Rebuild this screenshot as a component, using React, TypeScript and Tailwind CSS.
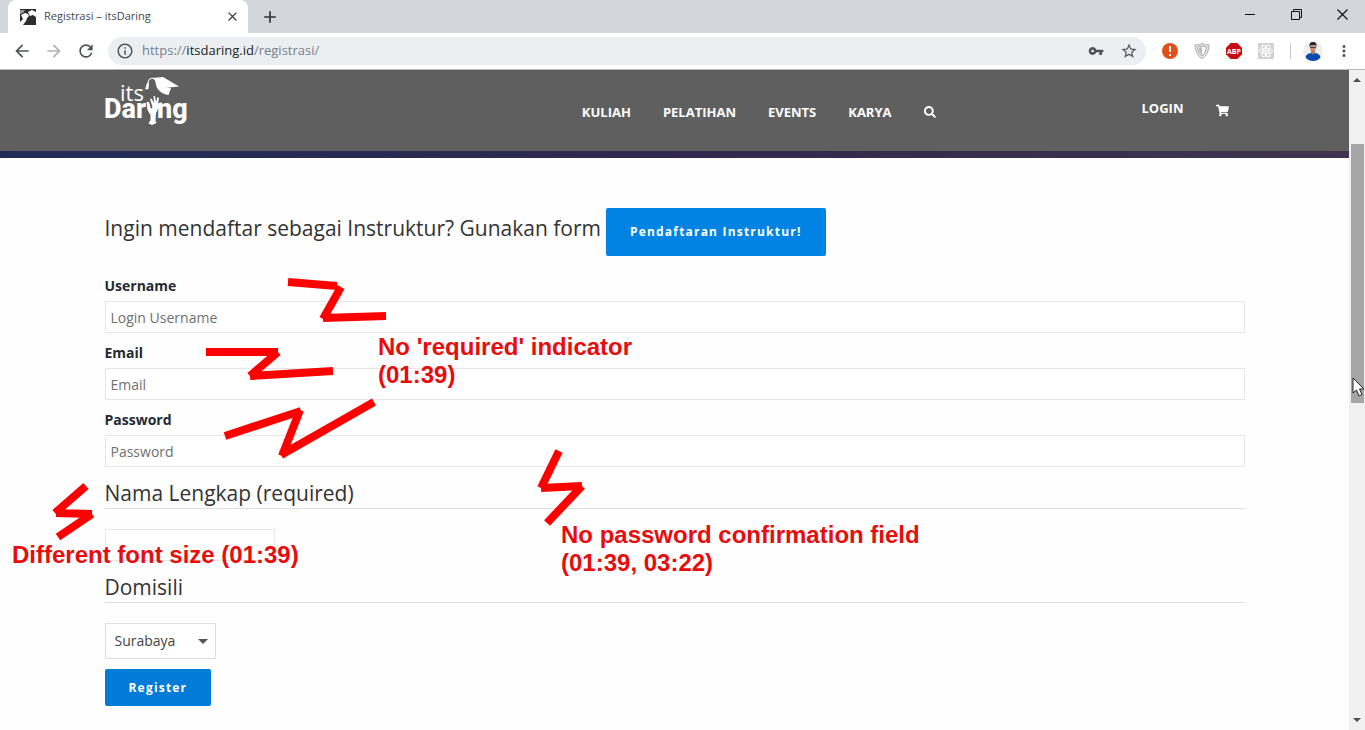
import type { ReactNode } from "react";
import { FaSearch, FaShoppingCart } from "react-icons/fa";
import { MdArrowBack, MdArrowForward, MdClose, MdAdd, MdInfoOutline, MdMoreVert, MdRefresh, MdStarBorder, MdVpnKey } from "react-icons/md";

function Favicon() {
  return (
    <svg viewBox="0 0 16 16" className="h-4 w-4" aria-hidden="true">
      <rect width="16" height="16" fill="#2d2d2d" />
      <path d="M0 1H5L3 4L0 5Z" fill="#999" />
      <path d="M8 3L12 1L16 3V8L13 6L10 7L9 5Z" fill="#fff" />
      <path d="M1 6L5 4L8 5L9 7L7 9L6 12L3 16H0V13L3 10Z" fill="#fff" />
    </svg>
  );
}

function TabStrip() {
  return (
    <div className="flex h-[33px] bg-[#d3d7db] pl-2">
      <div className="flex w-60 items-center gap-2 rounded-t-lg bg-white pr-2 pl-3">
        <Favicon />
        <span className="flex-1 text-[11px] whitespace-nowrap text-[#45494d]">Registrasi – itsDaring</span>
        <button aria-label="Close tab" className="text-[#3c4043]">
          <MdClose size={15} />
        </button>
      </div>
      <button aria-label="New tab" className="ml-3 text-[#303336]">
        <MdAdd size={20} />
      </button>
      <div className="ml-auto flex h-7 items-center">
        <button aria-label="Minimize" className="flex w-[46px] justify-center">
          <svg width="11" height="11" stroke="#111" aria-hidden="true"><path d="M0 5.5H10" /></svg>
        </button>
        <button aria-label="Restore" className="flex w-[46px] justify-center">
          <svg width="11" height="11" fill="none" stroke="#111" aria-hidden="true"><path d="M.5 2.5H8.500V10.500H.5ZM2.500 2.500V.5H10.500V8.500H8.500" /></svg>
        </button>
        <button aria-label="Close" className="flex w-[46px] justify-center">
          <svg width="11" height="11" stroke="#111" strokeWidth="1.200" aria-hidden="true"><path d="M.5 .5L10.500 10.500M10.500 .5L.5 10.500" /></svg>
        </button>
      </div>
    </div>
  );
}

function AlertIcon() {
  return (
    <svg viewBox="0 0 16 16" className="h-4 w-4" aria-hidden="true">
      <circle cx="8" cy="8" r="8" fill="#e34f1c" />
      <path d="M8 3V9M8 11V13" stroke="#fff" strokeWidth="2" />
    </svg>
  );
}

function ShieldIcon() {
  return (
    <svg viewBox="0 0 16 16" className="h-4 w-4" aria-hidden="true">
      <path d="M8 .7C10 1.500 13 2 15 1.800C15 7 13 13 8 15.500C3 13 1 7 1 1.800C3 2 6 1.500 8 .7Z" fill="#e7e7e7" stroke="#aaa" />
      <path d="M8 3L12.500 4C12 8 10.500 11 8 13C5.500 11 4 8 3.500 4Z" fill="#fff" stroke="#a5a5a5" />
      <path d="M8 4V12C6 10 5 8 4.500 5Z" fill="#bbb" />
    </svg>
  );
}

function AdblockIcon() {
  return (
    <svg viewBox="0 0 16 16" className="h-4 w-4" aria-hidden="true">
      <path d="M4.700 0H11.300L16 4.700V11.300L11.300 16H4.700L0 11.300V4.700Z" fill="#c70d13" />
      <text x="8" y="10.500" textAnchor="middle" fill="#fff" fontSize="7" fontWeight="700">ABP</text>
    </svg>
  );
}

function AtomIcon() {
  return (
    <svg viewBox="0 0 16 16" className="h-4 w-4" fill="none" stroke="#fff" aria-hidden="true">
      <rect width="16" height="16" fill="#d2d2d2" stroke="none" />
      <ellipse cx="8" cy="8" rx="6.500" ry="2.500" />
      <ellipse cx="8" cy="8" rx="6.500" ry="2.500" transform="rotate(60 8 8)" />
      <ellipse cx="8" cy="8" rx="6.500" ry="2.500" transform="rotate(120 8 8)" />
      <circle cx="8" cy="8" r="1" fill="#fff" />
    </svg>
  );
}

function Avatar() {
  return (
    <svg viewBox="0 0 20 20" className="h-5 w-5" aria-hidden="true">
      <circle cx="10" cy="10" r="10" fill="#efefef" />
      <path d="M2.500 16.500Q3 12.500 8 12L10 13L12 12Q17 12.500 17.500 16.500Q14.500 20 10 20T2.500 16.500Z" fill="#0b4bb0" />
      <path d="M8 9H12V12L10 13.500L8 12Z" fill="#b77c62" />
      <ellipse cx="10" cy="6.500" rx="3" ry="4" fill="#c98f74" />
      <path d="M6.500 6Q5.800 1 10 1T13.500 6L12.500 4H8Z" fill="#24242c" />
      <path d="M7 6.500H13" stroke="#39313a" strokeWidth=".8" />
    </svg>
  );
}

function Toolbar() {
  return (
    <div className="flex h-[37px] items-center border-b border-[#b8b8b8] bg-white pr-3 pl-3 text-[#50545a]">
      <button aria-label="Back"><MdArrowBack size={20} /></button>
      <button aria-label="Forward" className="ml-3 text-[#b0b2b5]"><MdArrowForward size={20} /></button>
      <button aria-label="Reload" className="ml-3"><MdRefresh size={20} /></button>
      <div className="ml-3 flex h-7 flex-1 items-center rounded-full bg-[#eceff1] px-2">
        <MdInfoOutline size={18} />
        <span className="ml-2 flex-1 text-[13px] text-[#77808a]">
          https://<span className="text-[#222]">itsdaring.id</span>/registrasi/
        </span>
        <button aria-label="Saved password"><MdVpnKey size={16} /></button>
        <button aria-label="Bookmark" className="ml-4"><MdStarBorder size={18} /></button>
      </div>
      <div className="ml-4 flex items-center gap-4">
        <AlertIcon />
        <ShieldIcon />
        <AdblockIcon />
        <AtomIcon />
        <span className="h-4 w-px bg-[#c8c8c8]" />
      </div>
      <div className="ml-3 flex items-center gap-3">
        <Avatar />
        <button aria-label="Menu"><MdMoreVert size={18} /></button>
      </div>
    </div>
  );
}

function Logo() {
  return (
    <a href="#home" aria-label="its Daring" className="mt-1">
      <svg width="84" height="54" viewBox="0 0 84 54" fill="#fff" className="block overflow-visible">
        <text x="15" y="27" fontSize="22" fontFamily="Open Sans, sans-serif">its</text>
        <text x="-1" y="44" fontSize="27" fontWeight="800" fontFamily="Roboto, sans-serif">Dar</text>
        <text x="52" y="44" fontSize="27" fontWeight="800" fontFamily="Roboto, sans-serif">ng</text>
        <path d="M41.500 28L44 28L46 35L47.500 33L45 25L46.500 24.500L49 29L48.500 22L50 22L51 28L52.500 23L54 24L53 31L56 28L57 29.500L53 35L51 39L50.500 47L51.500 49L47 51L43.500 49.500L45.500 46L45.500 41L42.500 36Z" />
        <path d="M48.500 4C43.500 4 43 7 42.800 10" fill="none" stroke="#fff" strokeWidth="1.200" />
        <path d="M42 9H44L43.500 15L40 15.500Z" />
        <path d="M47.500 4L58 3L74 12.500L59 14L55 12Z" />
        <path d="M50 7L58 13L66 14L63.500 21Q56 20 52 14Z" />
      </svg>
    </a>
  );
}

function SiteHeader() {
  return (
    <header>
      <div className="bg-[#5f5f5f] text-white">
        <div className="mx-auto flex h-[81px] max-w-[1140px] items-start">
          <Logo />
          <nav className="mt-8 ml-auto flex items-center gap-8 text-[13px] leading-5 font-bold">
            <a href="#kuliah">KULIAH</a>
            <a href="#pelatihan">PELATIHAN</a>
            <a href="#events">EVENTS</a>
            <a href="#karya">KARYA</a>
            <button aria-label="Search"><FaSearch size={12} /></button>
          </nav>
          <div className="mt-7 mr-4 ml-[206px] flex gap-8 text-[13px] leading-5 font-bold">
            <a href="#login">LOGIN</a>
            <a href="#cart" aria-label="Cart" className="pt-[6px]"><FaShoppingCart size={13} /></a>
          </div>
        </div>
      </div>
      <div className="h-[7px] bg-linear-to-r from-[#202c58] via-[#30294d] to-[#40344f]" />
    </header>
  );
}

function Field({ id, label, type, placeholder }: { id: string; label: string; type: string; placeholder: string }) {
  return (
    <div>
      <label htmlFor={id} className="block h-[35px] pt-2 text-sm leading-6 font-bold text-[#252a31]">{label}</label>
      <input id={id} type={type} placeholder={placeholder} className="block h-8 w-full border border-[#e6e6e6] bg-white px-[5px] text-sm placeholder:text-[#707070]" />
    </div>
  );
}

function SectionLabel({ htmlFor, children }: { htmlFor: string; children: ReactNode }) {
  return (
    <label htmlFor={htmlFor} className="block border-b border-[#dedede] text-[21px] leading-[30px] text-[#333]">
      {children}
    </label>
  );
}

function RegistrationForm() {
  return (
    <form className="mx-auto max-w-[1140px] pt-[50px] pb-6">
      <div className="flex items-center gap-[5px]">
        <p className="pb-2 text-[21px] leading-8 text-[#333]">Ingin mendaftar sebagai Instruktur? Gunakan form</p>
        <button type="button" className="h-12 rounded-xs bg-[#0083e2] px-6 text-xs font-bold tracking-widest text-white">
          Pendaftaran Instruktur!
        </button>
      </div>
      <div className="pt-[10px]">
        <Field id="username" label="Username" type="text" placeholder="Login Username" />
        <Field id="email" label="Email" type="email" placeholder="Email" />
        <Field id="password" label="Password" type="password" placeholder="Password" />
      </div>
      <div className="pt-[11px]">
        <SectionLabel htmlFor="fullname">Nama Lengkap (required)</SectionLabel>
        <input id="fullname" type="text" className="mt-5 block h-8 w-[170px] border border-[#e6e6e6] bg-white px-1 text-sm" />
      </div>
      <div className="pt-[11px]">
        <SectionLabel htmlFor="domisili">Domisili</SectionLabel>
        <div className="mt-5 grid w-[111px] items-center">
          <select id="domisili" defaultValue="Surabaya" className="col-start-1 row-start-1 h-9 w-full appearance-none border border-[#dedede] bg-white pl-[9px] text-sm text-[#444]">
            <option>Surabaya</option>
          </select>
          <svg width="10" height="5" className="pointer-events-none col-start-1 row-start-1 mr-2 justify-self-end" aria-hidden="true">
            <path d="M0 0H10L5 5Z" fill="#555" />
          </svg>
        </div>
      </div>
      <button type="button" className="mt-[10px] block h-[37px] rounded-xs bg-[#007bd8] px-6 text-xs font-bold tracking-widest text-white">
        Register
      </button>
    </form>
  );
}

function Scrollbar() {
  return (
    <div className="flex w-4 flex-col items-center bg-[#f0f0f0]" aria-hidden="true">
      <svg width="8" height="4" className="mt-2"><path d="M0 4L4 0L8 4Z" fill="#505050" /></svg>
      <div className="mt-[62px] h-[259px] w-[13px] bg-[#a6a6a6]" />
      <svg width="8" height="4" className="mt-auto mb-2"><path d="M0 0L4 4L8 0Z" fill="#505050" /></svg>
    </div>
  );
}

function Annotations() {
  return (
    <div className="pointer-events-none absolute inset-0 font-['Liberation_Sans',sans-serif] text-2xl leading-7 font-bold whitespace-nowrap text-[#e80c0c]">
      <svg className="absolute inset-0 h-full w-full" fill="none" stroke="#f00" strokeWidth="8" aria-hidden="true">
        <path d="M288 282L337 286M341 287L323 319M323 318L386 316" />
        <path d="M206 352L278 352M278 352L250 376M250 376L333 371" />
        <path d="M225 436L301 411M300 410L282 456M281 455L374 402" />
        <path d="M86 486L55 513M56 513L92 514M92 514L58 537" />
        <path d="M559 451L541 488M541 488L582 486M582 486L547 523" />
      </svg>
      <p className="absolute top-[333px] left-[378px]">No 'required' indicator<br />(01:39)</p>
      <p className="absolute top-[521px] left-[561px]">No password confirmation field<br />(01:39, 03:22)</p>
      <p className="absolute top-[541px] left-3">Different font size (01:39)</p>
      <svg width="13" height="20" viewBox="0 0 13 20" className="absolute top-[377px] left-[1352px]" aria-hidden="true">
        <path d="M1 1V16L4.500 13L7 19L10 17.500L7.500 12H12Z" fill="#fff" stroke="#222" />
      </svg>
    </div>
  );
}

export default function App() {
  return (
    <div className="relative flex min-h-screen flex-col bg-white font-['Open_Sans',sans-serif]">
      <TabStrip />
      <Toolbar />
      <div className="flex flex-1">
        <main className="flex-1 bg-[#fefefe]">
          <SiteHeader />
          <RegistrationForm />
        </main>
        <Scrollbar />
      </div>
      <Annotations />
    </div>
  );
}
